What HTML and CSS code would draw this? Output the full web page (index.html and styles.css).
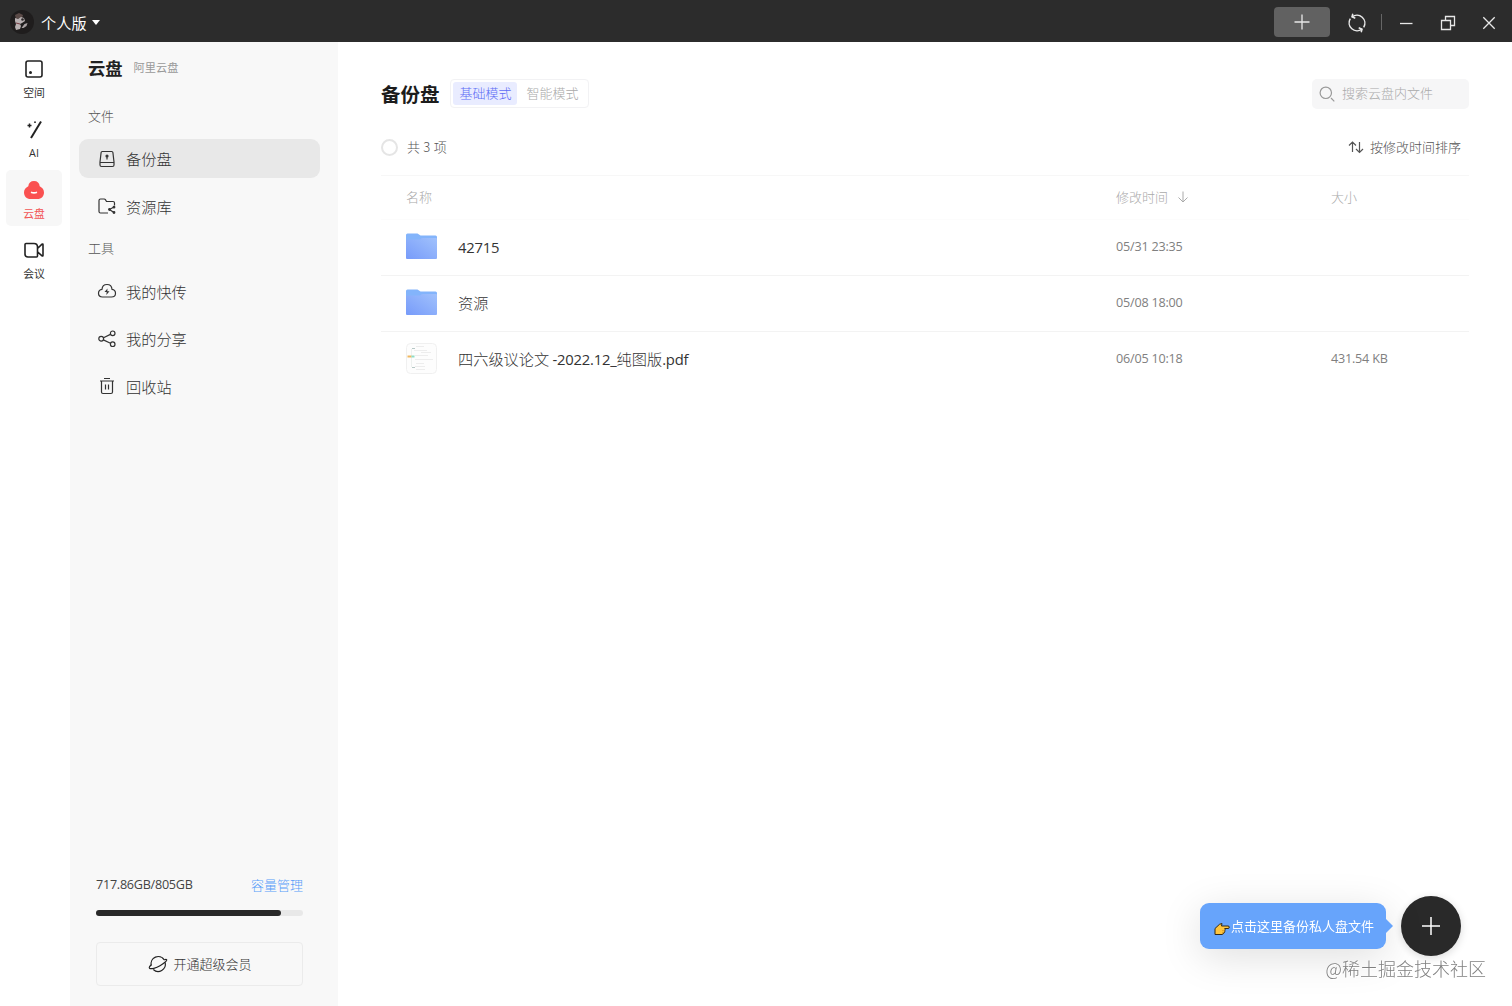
FILE: index.html
```html
<!DOCTYPE html>
<html lang="zh-CN">

<head>
    <meta charset="UTF-8">
    <meta name="viewport" content="width=device-width, initial-scale=1.0">
    <title>阿里云盘</title>
    <link rel="stylesheet" href="styles.css">
</head>

<body>
    <header class="titlebar">
        <svg class="avatar" width="24" height="24" viewBox="0 0 24 24">
            <circle cx="12" cy="12" r="12" fill="#1f1d1d" />
            <path d="M5 5l4-2 4 2-1 3-6 1z" fill="#5a4a47" />
            <path d="M5 8l3 1 3-2 3 1 1 3-3 2-2 1 1 2-1 3-4 1-1-3 1-3-1-3z" fill="#b8b0b1" />
            <path d="M11.500 18l3-4 3-1-1 3-3 2z" fill="#aaa3a4" />
            <circle cx="12.500" cy="9.500" r="1.300" fill="#2a2627" />
            <path d="M6 13l4 1" stroke="#763c43" stroke-width="1" />
        </svg>
        <span class="account">个人版</span>
        <span class="caret"></span>
        <div class="window-tools">
            <button class="new-btn">
                <svg width="16" height="16" viewBox="0 0 16 16"><path d="M8 .500v15M.500 8h15" /></svg>
            </button>
            <svg class="sync" width="20" height="20" viewBox="0 0 20 20">
                <path d="M5 3.800A8 8 0 0 1 16.700 14.300M15 16.200A8 8 0 0 1 3.300 5.700" />
                <path d="M8.300 5.200L5 3.800 5.800 .800M11.700 14.800l3.300 1.400-.800 3" />
            </svg>
            <span class="divider"></span>
            <svg class="win-min" width="16" height="16" viewBox="0 0 16 16"><path d="M2 8.500h12.500" /></svg>
            <svg class="win-max" width="16" height="16" viewBox="0 0 16 16"><path d="M1.500 5.500h9v9h-9zM5.500 5.500v-4h9v9h-4" /></svg>
            <svg class="win-close" width="16" height="16" viewBox="0 0 16 16"><path d="M2.300 2.300l11.400 11.400M13.700 2.300L2.300 13.700" /></svg>
        </div>
    </header>

    <div class="layout">
        <nav class="rail">
            <a class="rail-item">
                <svg width="22" height="22" viewBox="0 0 22 22">
                    <rect x="3" y="3" width="16" height="16" rx="2" />
                    <circle cx="7.500" cy="14.500" r="1.500" fill="#222" stroke="none" />
                </svg>
                <span>空间</span>
            </a>
            <a class="rail-item">
                <svg width="22" height="22" viewBox="0 0 22 22">
                    <path d="M18 3.500L8 20" stroke-width="2" />
                    <path d="M6.500 5.500v4M4.500 7.500h4" stroke-width="1.500" />
                    <circle cx="12" cy="4.200" r=".9" fill="#222" stroke="none" />
                </svg>
                <span class="latin">AI</span>
            </a>
            <a class="rail-item active">
                <svg width="22" height="22" viewBox="0 0 22 22">
                    <path d="M11 2C7.600 2 5.600 4 5.300 7.300 2.600 8.700 1 10.700 1 13.500 1 17.300 3.700 20 7.500 20h7c3.800 0 6.500-2.700 6.500-6.500 0-2.800-1.600-4.800-4.300-6.200C16.400 4 14.400 2 11 2z" fill="#fa5151" stroke="none" />
                    <path d="M8 13.200q3 1.400 6 0" stroke="#fff" stroke-width="1.600" />
                </svg>
                <span>云盘</span>
            </a>
            <a class="rail-item">
                <svg width="22" height="22" viewBox="0 0 22 22">
                    <path d="M3 4.500h8q3.500 0 3.500 3.500V17q0 1-1 1H5q-3 0-3-3V5.500q0-1 1-1zM14.500 9.500L19 5.200q1-.700 1 .500v10.600q0 1.200-1 .500l-4.500-4" />
                </svg>
                <span>会议</span>
            </a>
        </nav>

        <aside class="sidebar">
            <div class="brand"><strong>云盘</strong><span>阿里云盘</span></div>

            <h2 class="group-title">文件</h2>
            <ul class="menu">
                <li class="menu-item active">
                    <svg width="20" height="20" viewBox="0 0 20 20">
                        <path d="M5.200 2.500h9.600q1 0 1.100 1l1.100 9.500v3q0 1.500-1.500 1.500h-11Q3 17.500 3 16v-3l1.100-9.500q.100-1 1.100-1zM3.200 13.500h13.600M10 7v3.500" />
                        <circle cx="10" cy="7" r="1" fill="#333" />
                    </svg>
                    <span>备份盘</span>
                </li>
                <li class="menu-item">
                    <svg width="20" height="20" viewBox="0 0 20 20">
                        <path d="M11 17H3.500Q2 17 2 15.500v-11Q2 3 3.500 3h3.700q.800 0 1.200.600L9.500 5.500H16q1.500 0 1.500 1.500v2.500M16.500 11.300l-4 2.200 4 2.800" />
                        <circle cx="17" cy="11.200" r=".8" fill="#333" />
                        <circle cx="12.500" cy="13.500" r=".8" fill="#333" />
                        <circle cx="17" cy="16.500" r=".8" fill="#333" />
                    </svg>
                    <span>资源库</span>
                </li>
            </ul>

            <h2 class="group-title tools">工具</h2>
            <ul class="menu">
                <li class="menu-item">
                    <svg width="20" height="20" viewBox="0 0 20 20">
                        <path d="M5.500 16C3 16 1.500 14.300 1.500 12.200c0-2 1.300-3.600 3.500-3.900C5.200 5.500 7.200 3.500 10 3.500s4.800 2 5 4.800c2.200.300 3.500 1.900 3.500 3.900 0 2.100-1.500 3.800-4 3.800z" />
                        <path d="M10.500 7.500L7.500 11h2.200l-.400 3 3.200-3.700h-2.200z" fill="#333" stroke="none" />
                    </svg>
                    <span>我的快传</span>
                </li>
                <li class="menu-item">
                    <svg width="20" height="20" viewBox="0 0 20 20">
                        <circle cx="4.200" cy="9.700" r="2.400" />
                        <circle cx="15.700" cy="4.300" r="2.300" />
                        <circle cx="15.700" cy="15.200" r="2.300" />
                        <path d="M6.500 8.700l6.900-3.300M6.300 10.900l7.200 3.300" />
                    </svg>
                    <span>我的分享</span>
                </li>
                <li class="menu-item">
                    <svg width="20" height="20" viewBox="0 0 20 20">
                        <path d="M3 5h14M7 2.500h6M4.500 5v11q0 1.500 1.500 1.500h8q1.500 0 1.500-1.500V5M8.500 8.500v5M11.500 8.500v5" />
                    </svg>
                    <span>回收站</span>
                </li>
            </ul>

            <div class="storage">
                <div class="storage-text"><span class="latin">717.86GB/805GB</span><a>容量管理</a></div>
                <div class="bar"><div class="bar-used" style="width: 89.200%"></div></div>
                <button class="vip">
                    <svg width="20" height="20" viewBox="0 0 20 20">
                        <path d="M3.300 11.500A7.200 7.200 0 0 1 16.300 5.800M17.200 8.700A7.200 7.200 0 0 1 5.300 15.500" />
                        <path d="M3.300 10.700C1.300 12.500.900 13.500 1.500 14.200c1.300 1.200 6.700-.100 10.500-2.500 4.600-2.600 7.300-5.200 6.600-6-.300-.400-1.200-.300-2.300.200" />
                    </svg>
                    <span>开通超级会员</span>
                </button>
            </div>
        </aside>

        <main class="content">
            <div class="content-head">
                <h1>备份盘</h1>
                <div class="modes"><span class="mode active">基础模式</span><span class="mode">智能模式</span></div>
                <div class="search">
                    <svg width="18" height="18" viewBox="0 0 18 18"><circle cx="7.800" cy="7.800" r="5.700" /><path d="M13 13l3.300 3.300" /></svg>
                    <span>搜索云盘内文件</span>
                </div>
            </div>

            <div class="toolbar">
                <span class="check-all"></span>
                <span class="total">共 3 项</span>
                <div class="sort">
                    <svg width="16" height="16" viewBox="0 0 16 16"><path d="M4.500 13V3M1 6.500L4.500 3 8 6.500M11.500 3v10.500M8 10l3.500 3.500L15 10" /></svg>
                    <span>按修改时间排序</span>
                </div>
            </div>

            <div class="files">
                <div class="row row-head">
                    <span class="col-name">名称</span>
                    <span class="col-time">修改时间
                        <svg width="12" height="12" viewBox="0 0 12 12"><path d="M6 .500v10.500M1.500 6.500L6 11l4.500-4.500" /></svg>
                    </span>
                    <span>大小</span>
                </div>
                <div class="row">
                    <svg class="thumb" width="31" height="31" viewBox="0 0 31 31">
                        <defs>
                            <linearGradient id="folder" x1="0" y1="1" x2="1" y2="0">
                                <stop offset="0" stop-color="#779bfa" />
                                <stop offset="1" stop-color="#a0c1fc" />
                            </linearGradient>
                        </defs>
                        <path d="M0 4q0-1.500 1.500-1.500h10l3 2H29.500q1.500 0 1.500 1.500v10H0z" fill="#83b4fb" />
                        <path d="M0 9.500q0-1 1-1h13l2-1.500h14q1 0 1 1v19q0 1-1 1H1q-1 0-1-1z" fill="url(#folder)" />
                    </svg>
                    <span class="file-name latin">42715</span>
                    <span class="file-meta latin">05/31 23:35</span>
                    <span></span>
                </div>
                <div class="row">
                    <svg class="thumb" width="31" height="31" viewBox="0 0 31 31">
                        <path d="M0 4q0-1.500 1.500-1.500h10l3 2H29.500q1.500 0 1.500 1.500v10H0z" fill="#83b4fb" />
                        <path d="M0 9.500q0-1 1-1h13l2-1.500h14q1 0 1 1v19q0 1-1 1H1q-1 0-1-1z" fill="url(#folder)" />
                    </svg>
                    <span class="file-name">资源</span>
                    <span class="file-meta latin">05/08 18:00</span>
                    <span></span>
                </div>
                <div class="row">
                    <svg class="thumb" width="31" height="31" viewBox="0 0 31 31">
                        <rect x=".5" y=".5" width="30" height="30" rx="4" fill="#fdfdfd" stroke="#f0f0f0" />
                        <path d="M10 3.500h8M8 7.500h13M15 9.500h10M9 12.500h13M9 16.500h18M10 20.500h8M9 23.500h10M10 26.500h9" stroke="#ededed" />
                        <path d="M5.500 6v18" stroke="#edf1ef" />
                        <path d="M1.500 13.500h4" stroke="#f0b860" stroke-width="2" />
                        <path d="M5.500 13.500h3" stroke="#8fdcc6" stroke-width="2" />
                        <path d="M6 5.500h3M6 24.500h3" stroke="#b7c8c6" />
                    </svg>
                    <span class="file-name">四六级议论文 <span class="latin">-2022.12_</span>纯图版<span class="latin">.pdf</span></span>
                    <span class="file-meta latin">06/05 10:18</span>
                    <span class="file-meta latin">431.54 KB</span>
                </div>
            </div>
        </main>
    </div>

    <div class="upload">
        <div class="tip">
            <svg width="16" height="14" viewBox="0 0 16 14">
                <path d="M1 6.500L5.500 2.300 8 1.500 7.500 4H14q1.300 0 1.300 1.200T14 6.500h-3.300q.800 1 .200 1.900.300 1-.500 1.600 0 1.200-1.200 1.800L8 12.500H1z" fill="#ffc53d" stroke="#332a17" stroke-linejoin="round" />
                <path d="M8 8.700h2.500M8 10.700h2" stroke="#b87813" stroke-width=".5" />
            </svg>
            <span>点击这里备份私人盘文件</span>
        </div>
        <button class="fab">
            <svg width="20" height="20" viewBox="0 0 20 20"><path d="M10 1v18M1 10h18" /></svg>
        </button>
    </div>
    <div class="watermark">@稀土掘金技术社区</div>
</body>

</html>
```

FILE: styles.css
```css
* {
    box-sizing: border-box;
}

body {
    margin: 0;
    height: 100vh;
    display: flex;
    flex-direction: column;
    overflow: hidden;
    background: #fff;
    color: #333;
    font-family: "Noto Sans CJK SC", sans-serif;
    font-size: 13px;
    font-weight: 300;
    line-height: 20px;
}

.latin {
    font-family: "Open Sans", "Noto Sans CJK SC", sans-serif;
    font-weight: 400;
}

button {
    border: 0;
    padding: 0;
    font: inherit;
    color: inherit;
    display: flex;
    align-items: center;
    justify-content: center;
}

svg {
    display: block;
    flex: none;
    fill: none;
}

/* title bar */
.titlebar {
    height: 42px;
    flex: none;
    display: flex;
    align-items: center;
    padding: 2px 15px 0 10px;
    background: #2c2c2c;
    color: #fff;
}

.account {
    margin-left: 7px;
    font-size: 15.2px;
    font-weight: 400;
}

.caret {
    margin-left: 5px;
    border: 4px solid transparent;
    border-top: 5px solid #fff;
    border-bottom: 0;
}

.window-tools {
    margin-left: auto;
    display: flex;
    align-items: center;
    padding-top: 1px;
    stroke: #e8e8e8;
    stroke-width: 1.3;
}

.new-btn {
    width: 56px;
    height: 30px;
    margin-top: -1px;
    border-radius: 4px;
    background: #616161;
}

.sync {
    margin-left: 17px;
    stroke-width: 1.5;
}

.divider {
    width: 1px;
    height: 16px;
    margin: -2px 16px 0 14px;
    background: #666;
}

.win-max {
    margin: 0 25px 0 26px;
}

/* left icon rail */
.layout {
    flex: 1;
    display: flex;
    min-height: 0;
}

.rail {
    width: 70px;
    flex: none;
    display: flex;
    flex-direction: column;
    gap: 4.3px;
    padding: 7px 0 0 6px;
}

.rail-item {
    width: 56px;
    height: 56px;
    padding-top: 9px;
    display: flex;
    flex-direction: column;
    align-items: center;
    gap: 4px;
    border-radius: 5px;
    font-size: 10.8px;
    font-weight: 400;
    line-height: 16px;
    stroke: #222;
    stroke-width: 1.6;
}

.rail-item .latin {
    padding-top: 1px;
}

.rail-item.active {
    background: #f7f7f7;
    color: #f25555;
}

/* sidebar */
.sidebar {
    width: 268px;
    flex: none;
    display: flex;
    flex-direction: column;
    padding: 14px 18px 20px 9px;
    background: #f8f8f8;
}

.brand {
    display: flex;
    align-items: center;
    gap: 11px;
    height: 24px;
    padding-left: 9px;
    font-size: 11.2px;
    font-weight: 400;
    color: #999;
}

.brand span {
    margin-top: -2px;
}

.brand strong {
    font-size: 17.3px;
    font-weight: 700;
    color: #222;
}

.group-title {
    margin: 26px 0 13px;
    padding-left: 9px;
    font-size: 13px;
    font-weight: 300;
    line-height: 20px;
    color: #555;
}

.group-title.tools {
    margin: 12px 0 14px;
}

.menu {
    list-style: none;
    margin: 0;
    padding: 0;
    display: flex;
    flex-direction: column;
    gap: 8.5px;
}

.menu-item {
    height: 39px;
    display: flex;
    align-items: center;
    gap: 9px;
    padding-left: 18px;
    border-radius: 9px;
    font-size: 15.2px;
    stroke: #333;
    stroke-width: 1.2;
}

.menu-item span {
    margin-top: -1px;
}

.menu-item.active {
    background: #e8e8e8;
}

.storage {
    margin-top: auto;
    padding: 0 17px;
}

.storage-text {
    display: flex;
    justify-content: space-between;
}

.storage-text .latin {
    font-size: 12.6px;
    letter-spacing: -0.25px;
    color: #444;
}

.storage-text a {
    color: #579cf8;
}

.bar {
    height: 6px;
    margin-top: 15px;
    border-radius: 3px;
    background: #e8e8e8;
}

.bar-used {
    height: 6px;
    border-radius: 3px;
    background: #292929;
}

.vip {
    width: 100%;
    height: 44px;
    margin-top: 26px;
    gap: 5px;
    padding-left: 1px;
    border: 1px solid #ebebeb;
    border-radius: 4px;
    background: transparent;
    stroke: #222;
    stroke-width: 1.2;
}

/* file list */
.content {
    flex: 1;
    padding: 36px 43px 0;
}

.content-head {
    display: flex;
    align-items: center;
    height: 31px;
}

.content-head h1 {
    margin: 0;
    font-size: 19.5px;
    font-weight: 700;
    color: #1c1c1c;
}

.modes {
    display: flex;
    margin-left: 10px;
    padding: 2px;
    border: 1px solid #f2f2f4;
    border-radius: 4px;
}

.mode {
    padding: 1px 7px 2px;
    border-radius: 3px;
    color: #aaa;
}

.mode.active {
    padding: 1px 5px 2px 7px;
    background: #e9ecff;
    color: #5d6cf5;
    margin-right: 3px;
}

.search {
    width: 157px;
    height: 30px;
    margin-left: auto;
    display: flex;
    align-items: center;
    gap: 6px;
    padding-left: 6px;
    border-radius: 5px;
    background: #f6f6f7;
    color: #aaa;
    stroke: #999;
    stroke-width: 1.2;
}

.search span {
    margin-top: -2px;
}

.toolbar {
    display: flex;
    align-items: center;
    height: 20px;
    margin-top: 28px;
    color: #555;
}

.total {
    word-spacing: 0.5px;
}

.check-all {
    width: 17px;
    height: 17px;
    margin-right: 9px;
    border: 2px solid #e5e5e5;
    border-radius: 50%;
}

.sort {
    margin: 0 8px 0 auto;
    display: flex;
    align-items: center;
    gap: 6px;
    stroke: #555;
    stroke-width: 1.2;
}

.files {
    margin-top: 18px;
    border-top: 1px solid #f7f7f7;
}

.row {
    height: 56px;
    display: grid;
    grid-template-columns: 52px 658px 215px 1fr;
    align-items: center;
    padding: 0 0 1px 25px;
    border-bottom: 1px solid #f3f3f3;
}

.row:last-child {
    border-bottom-color: transparent;
}

.row-head {
    height: 44px;
    padding-bottom: 2px;
    border-color: #fcfcfc;
    color: #aaa;
}

.col-name {
    grid-column: span 2;
}

.col-time {
    display: flex;
    align-items: center;
    gap: 9px;
    stroke: #aaa;
}

.thumb {
    margin-top: -1px;
}

.file-name {
    margin-top: -2px;
    font-size: 15.2px;
}

.file-name.latin,
.file-name .latin {
    font-size: 14.8px;
    letter-spacing: -0.2px;
}

.file-name.latin {
    margin-top: 0;
}

.file-meta {
    font-size: 12.6px;
    letter-spacing: -0.2px;
    color: #808080;
}

/* floating upload button */
.upload {
    position: fixed;
    right: 51px;
    bottom: 50px;
    display: flex;
    align-items: center;
    gap: 15px;
}

.tip {
    position: relative;
    width: 186px;
    height: 46px;
    display: flex;
    align-items: center;
    gap: 1px;
    padding-left: 14px;
    border-radius: 9px;
    background: #67a4fb;
    color: #fff;
    font-weight: 400;
    white-space: nowrap;
    box-shadow: 0 8px 40px rgba(0, 0, 0, 0.13);
}

.tip svg {
    margin-top: 5px;
}

.tip::after {
    content: '';
    position: absolute;
    left: 100%;
    top: 16px;
    border: 7px solid transparent;
    border-left-color: #67a4fb;
    border-right: 0;
}

.fab {
    width: 60px;
    height: 60px;
    border-radius: 50%;
    background: #292929;
    stroke: #fff;
    stroke-width: 1.5;
    box-shadow: 0 2px 8px rgba(0, 0, 0, 0.15);
}

.watermark {
    position: fixed;
    right: 26px;
    bottom: 25px;
    font-size: 18px;
    line-height: 26px;
    color: #808080;
    text-shadow: 1px 1px 0 #fff;
}
```
